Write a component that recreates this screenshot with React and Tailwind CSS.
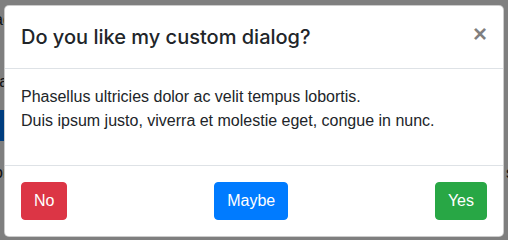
import React from "react";

const buttons = [
  { label: "No", className: "bg-[#dc3545] border-[#dc3545]" },
  { label: "Maybe", className: "bg-[#007bff] border-[#007bff]" },
  { label: "Yes", className: "bg-[#28a745] border-[#28a745]" },
];

const App = () => {
  return (
    <div className="relative w-[508px] h-[240px] overflow-hidden bg-white text-[#212529] font-['Liberation_Sans',Arial,sans-serif] text-[16px] leading-6">
      {/* Page behind the modal */}
      <div className="flex flex-col">
        <div className="flex justify-between items-start -mx-[6px] pt-[8px] h-[70px]">
          <span>ad</span>
          <span>t</span>
        </div>
        <div className="flex justify-between -mx-[6px] h-[40px]">
          <span>ra</span>
          <span>r</span>
        </div>
        <div className="-ml-[40px] h-[31px] w-[60px] rounded bg-[#007bff]" />
        <div className="flex justify-between -mx-[6px] mt-[20px]">
          <span>or</span>
          <span>s</span>
        </div>
      </div>

      {/* Backdrop */}
      <div className="absolute inset-0 bg-black/50" />

      {/* Dialog */}
      <div className="absolute left-[4px] top-[5px] w-[500px] flex flex-col bg-white border border-black/20 rounded-[5px]">
        <div className="flex items-start justify-between p-4 border-b border-[#dee2e6]">
          <h5 className="font-['Inter',sans-serif] text-[20px] leading-[30px] font-medium">
            Do you like my custom dialog?
          </h5>
          <button className="-m-4 p-4 ml-auto text-[24px] leading-[24px] font-bold text-black/50">
            ×
          </button>
        </div>
        <div className="p-4">
          <p className="mb-4">
            Phasellus ultricies dolor ac velit tempus lobortis.
            <br />
            Duis ipsum justo, viverra et molestie eget, congue in nunc.
          </p>
        </div>
        <div className="flex items-center justify-between p-3 border-t border-[#dee2e6]">
          {buttons.map((b) => (
            <button
              key={b.label}
              className={`m-1 px-3 py-[6px] text-white border rounded ${b.className}`}
            >
              {b.label}
            </button>
          ))}
        </div>
      </div>
    </div>
  );
};

export default App;
